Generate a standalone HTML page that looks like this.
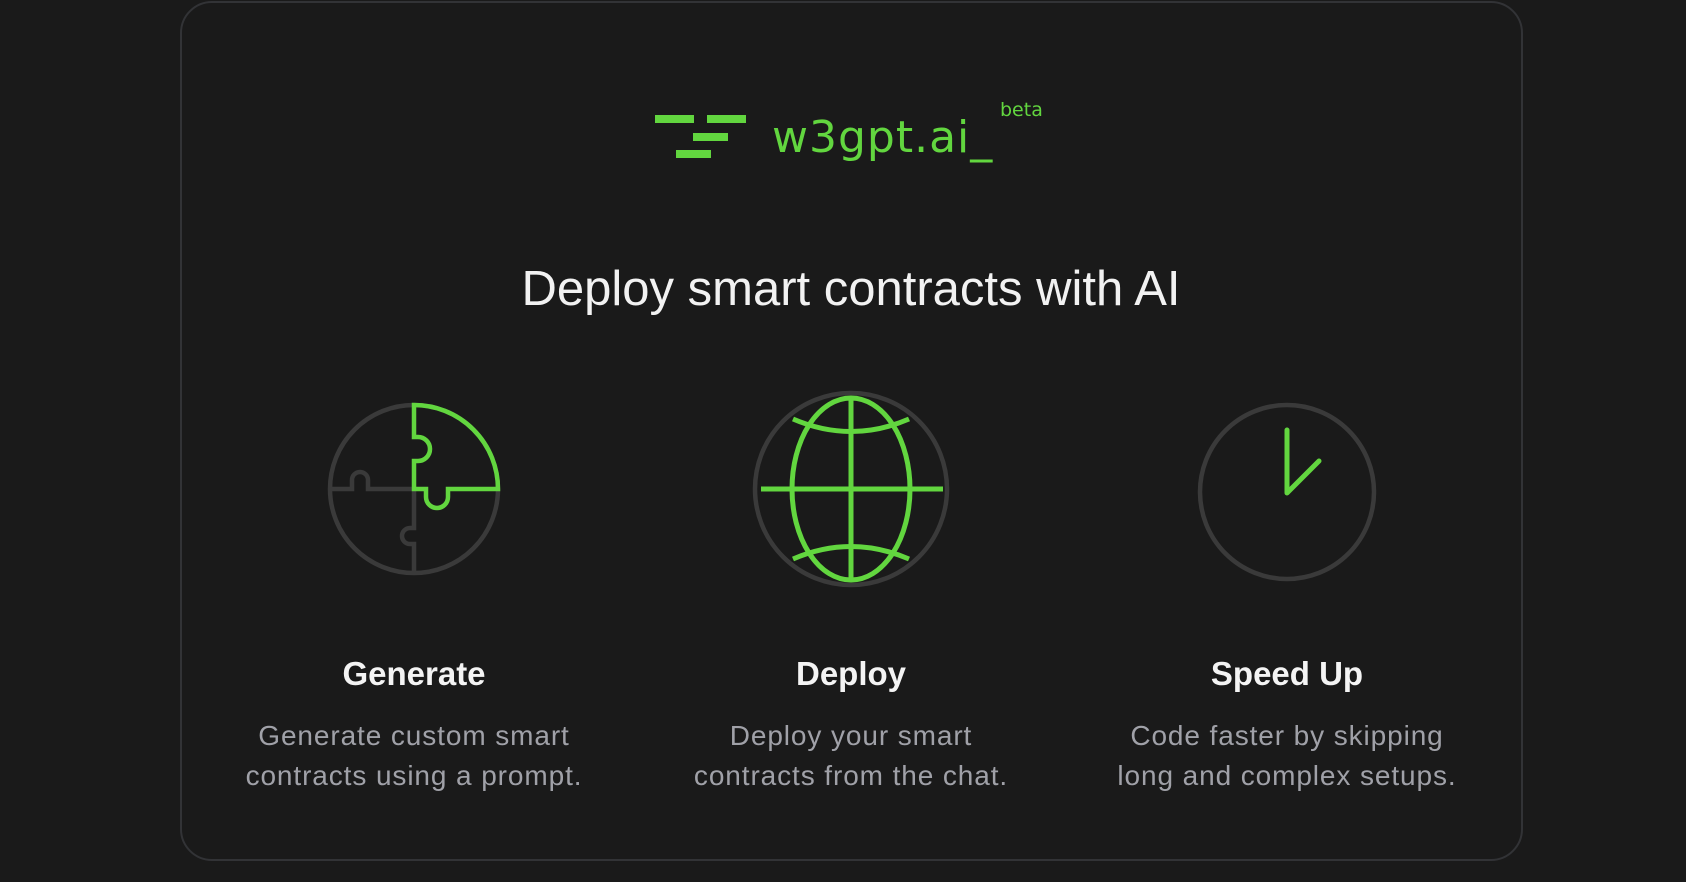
<!DOCTYPE html>
<html><head><meta charset="utf-8"><style>
html,body{margin:0;padding:0;background:#1a1a1a;width:1686px;height:882px;overflow:hidden;font-family:"Liberation Sans",sans-serif}
.card{position:absolute;left:180px;top:1px;width:1343px;height:860px;border:2px solid #323336;border-radius:32px;box-sizing:border-box}
.t{position:absolute;white-space:nowrap;transform:translateX(-50%)}
.h{color:#f2f2f2;font-size:49px;top:261px;left:851px}
.ti{color:#f4f4f4;font-weight:bold;font-size:33px;top:655px}
.d{color:#a0a1a8;font-size:28px;letter-spacing:0.9px;line-height:40px;top:716px;text-align:center}
</style></head><body>
<div class="card"></div>
<svg style="position:absolute;left:0;top:0" width="1686" height="882">
<g fill="#62d63f">
<rect x="655" y="115" width="39" height="8"/><rect x="707" y="115" width="39" height="8"/>
<rect x="693" y="133" width="35" height="8"/><rect x="676" y="150" width="35" height="8"/>
</g>
<text x="772" y="152" fill="#62d63f" font-family="DejaVu Sans" font-size="44" letter-spacing="1">w3gpt.ai_</text>
<text x="1000" y="116" fill="#62d63f" font-family="DejaVu Sans" font-size="19">beta</text>
<g fill="none" stroke-width="4.5">
<circle cx="414" cy="489" r="84" stroke="#3a3a3a"/>
<path d="M330 489 H352 V480 a8 8 0 0 1 16 0 V489 H414 V528 h-4 a8 8 0 0 0 0 16 h4 V573" stroke="#3a3a3a"/>
<path d="M414 405 A84 84 0 0 1 498 489 H448 v8 a11 11 0 0 1 -22 0 v-8 H414 V461 h4 a12 12 0 0 0 0 -24 h-4 Z" stroke="#62d63f"/>
<circle cx="851" cy="489" r="96" stroke="#3a3a3a"/>
<g stroke="#62d63f" stroke-width="5">
<ellipse cx="851" cy="489" rx="59" ry="91"/>
<path d="M761 489 H943 M851 398 V580"/>
<path d="M793 419 Q851 444 909 419 M793 559 Q851 534 909 559"/>
</g>
<circle cx="1287" cy="492" r="87" stroke="#3a3a3a"/>
<path d="M1287 430 V493 L1319 461" stroke="#62d63f" stroke-width="5" stroke-linecap="round" stroke-linejoin="round"/>
</g>
</svg>
<div class="t h">Deploy smart contracts with AI</div>
<div class="t ti" style="left:414px">Generate</div>
<div class="t ti" style="left:851px">Deploy</div>
<div class="t ti" style="left:1287px">Speed Up</div>
<div class="t d" style="left:414px">Generate custom smart<br>contracts using a prompt.</div>
<div class="t d" style="left:851px">Deploy your smart<br>contracts from the chat.</div>
<div class="t d" style="left:1287px">Code faster by skipping<br>long and complex setups.</div>
</body></html>
